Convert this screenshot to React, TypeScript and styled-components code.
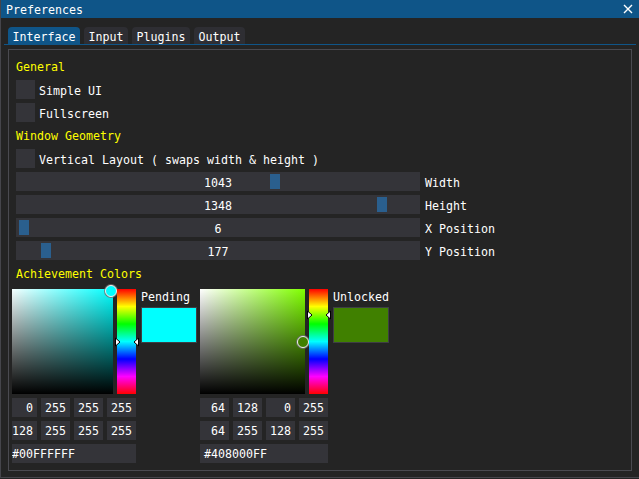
import React from 'react';
import styled, { createGlobalStyle } from 'styled-components';

const BLUE = '#0f5588';
const FRAME = '#343439';

const GlobalStyle = createGlobalStyle`
  html, body {
    margin: 0;
    padding: 0;
    background: #242424;
    overflow: hidden;
  }
  body {
    font-family: "DejaVu Sans Mono", "Liberation Mono", monospace;
    font-size: 11.63px;
    color: #ffffff;
  }
`;

const Window = styled.div`
  width: 640px;
  height: 478px;
  box-sizing: border-box;
  border: 1px solid #45454b;
  border-top: none;
  background: #242424;
  overflow: hidden;
  display: flex;
  flex-direction: column;
`;

const TitleBar = styled.div`
  height: 18px;
  flex: none;
  margin: 0 -1px;
  background: ${BLUE};
  display: flex;
  align-items: center;
  justify-content: space-between;
  padding: 0 7px 0 6px;
`;

const TitleText = styled.span`
  padding-top: 1px;
`;

const Body = styled.div`
  padding: 9px 7px 0;
  display: flex;
  flex-direction: column;
`;

const TabBar = styled.div`
  display: flex;
  gap: 4px;
  margin: 0 -4px;
  padding: 0 4px;
  height: 17px;
  border-bottom: 1px solid ${BLUE};
`;

const Tab = styled.div<{ $active?: boolean }>`
  padding: 0 4.5px;
  height: 17px;
  line-height: 20px;
  border-radius: 4px 4px 0 0;
  background: ${(p) => (p.$active ? BLUE : '#2e2e33')};
`;

const Child = styled.div`
  margin-top: 4px;
  height: 422px;
  box-sizing: border-box;
  border: 1px solid #4a4a50;
  padding: 7px;
  display: flex;
  flex-direction: column;
  gap: 4px;
`;

const Header = styled.div`
  height: 19px;
  line-height: 21px;
  color: #ffff00;
`;

const CheckRow = styled.div`
  display: flex;
  align-items: center;
  gap: 4px;
  height: 19px;
`;

const RowText = styled.span`
  padding-top: 2px;
`;

const CheckBox = styled.div`
  width: 19px;
  height: 19px;
  background: ${FRAME};
`;

const SliderRow = styled.div`
  display: flex;
  align-items: center;
  gap: 5px;
  height: 19px;
`;

const SliderTrack = styled.div`
  position: relative;
  width: 404px;
  height: 19px;
  background: ${FRAME};
  display: flex;
  align-items: center;
  justify-content: center;
`;

const Grab = styled.div`
  position: absolute;
  top: 2px;
  width: 10px;
  height: 15px;
  background: #2a5f8e;
`;

const SliderValue = styled.span`
  position: relative;
  padding-top: 2px;
`;

const PickerRow = styled.div`
  margin-top: 2px;
  margin-left: -4px;
  display: flex;
  gap: 3px;
  clip-path: inset(-20px -20px -20px 0);
`;

const Picker = styled.div<{ $shift?: number }>`
  display: flex;
  margin-left: ${(p) => p.$shift ?? 0}px;
`;

const PickerMain = styled.div`
  width: 128px;
  display: flex;
  flex-direction: column;
  gap: 4px;
`;

const PickerTop = styled.div`
  display: flex;
  gap: 4px;
  height: 105px;
`;

const SVSquare = styled.div<{ $hue: string }>`
  position: relative;
  width: 105px;
  height: 105px;
  background: linear-gradient(to bottom, rgba(0, 0, 0, 0), #000),
    linear-gradient(to right, #fff, ${(p) => p.$hue});
`;

const SVCursor = styled.div<{ $color: string }>`
  position: absolute;
  width: 12px;
  height: 12px;
  box-sizing: border-box;
  border-radius: 50%;
  border: 1.5px solid #f0f0f0;
  box-shadow: 0 0 0 1px rgba(110, 110, 110, 0.8);
  background: ${(p) => p.$color};
  transform: translate(-6px, -6px);
`;

const HueBar = styled.div`
  position: relative;
  width: 19px;
  height: 105px;
  background: linear-gradient(
    to bottom,
    #ff0000 0%,
    #ffff00 16.67%,
    #00ff00 33.33%,
    #00ffff 50%,
    #0000ff 66.67%,
    #ff00ff 83.33%,
    #ff0000 100%
  );
`;

const HueArrow = styled.svg<{ $side: 'left' | 'right' }>`
  position: absolute;
  width: 6px;
  height: 9px;
  transform: translateY(-4.5px);
  ${(p) => (p.$side === 'left' ? 'left: -2.5px;' : 'right: -2.5px;')}
`;

const FieldGrid = styled.div`
  display: grid;
  grid-template-columns: repeat(4, 29px);
  gap: 4px;
`;

const Field = styled.div`
  height: 19px;
  line-height: 21px;
  background: ${FRAME};
  text-align: center;
  white-space: pre;
`;

const HexField = styled.div`
  height: 19px;
  line-height: 21px;
  background: ${FRAME};
  padding-left: 4px;
`;

const LabelCol = styled.div`
  margin-left: 5px;
  padding-top: 1px;
  display: flex;
  flex-direction: column;
  gap: 4px;
`;

const PickerLabel = styled.div`
  height: 13px;
  line-height: 14px;
`;

const Swatch = styled.div<{ $color: string }>`
  width: 56px;
  height: 36px;
  box-sizing: border-box;
  border: 1px solid #3e3e44;
  background: ${(p) => p.$color};
`;

const CloseIcon = () => (
  <svg width="10" height="10" viewBox="0 0 10 10">
    <path d="M1 1 L9 9 M9 1 L1 9" stroke="#ffffff" strokeWidth="1.4" />
  </svg>
);

const Slider = ({ value, t, label }: { value: string; t: number; label: string }) => (
  <SliderRow>
    <SliderTrack>
      <Grab style={{ left: 2 + t * 390 }} />
      <SliderValue>{value}</SliderValue>
    </SliderTrack>
    <RowText>{label}</RowText>
  </SliderRow>
);

interface ColorPickerProps {
  hue: string;
  color: string;
  sv: [number, number];
  hueT: number;
  rgba: string[];
  hsva: string[];
  hex: string;
  label: string;
  shift?: number;
}

const ColorPicker = ({ hue, color, sv, hueT, rgba, hsva, hex, label, shift }: ColorPickerProps) => (
  <Picker $shift={shift}>
    <PickerMain>
      <PickerTop>
        <SVSquare $hue={hue}>
          <SVCursor $color={color} style={{ left: sv[0], top: sv[1] }} />
        </SVSquare>
        <HueBar>
          <HueArrow $side="left" viewBox="0 0 6 9" style={{ top: hueT * 105 }}>
            <polygon points="0.5,0.5 5,4.5 0.5,8.5" fill="#fff" stroke="#000" strokeWidth="1" />
          </HueArrow>
          <HueArrow $side="right" viewBox="0 0 6 9" style={{ top: hueT * 105 }}>
            <polygon points="5.5,0.5 1,4.5 5.5,8.5" fill="#fff" stroke="#000" strokeWidth="1" />
          </HueArrow>
        </HueBar>
      </PickerTop>
      <FieldGrid>
        {rgba.concat(hsva).map((v, i) => (
          <Field key={i}>{v}</Field>
        ))}
      </FieldGrid>
      <HexField>{hex}</HexField>
    </PickerMain>
    <LabelCol>
      <PickerLabel>{label}</PickerLabel>
      <Swatch $color={color} />
    </LabelCol>
  </Picker>
);

const App = () => (
  <>
    <GlobalStyle />
    <Window>
      <TitleBar>
        <TitleText>Preferences</TitleText>
        <CloseIcon />
      </TitleBar>
      <Body>
        <TabBar>
          <Tab $active>Interface</Tab>
          <Tab>Input</Tab>
          <Tab>Plugins</Tab>
          <Tab>Output</Tab>
        </TabBar>
        <Child>
          <Header>General</Header>
          <CheckRow>
            <CheckBox />
            <RowText>Simple UI</RowText>
          </CheckRow>
          <CheckRow>
            <CheckBox />
            <RowText>Fullscreen</RowText>
          </CheckRow>
          <Header>Window Geometry</Header>
          <CheckRow>
            <CheckBox />
            <RowText>Vertical Layout ( swaps width &amp; height )</RowText>
          </CheckRow>
          <Slider value="1043" t={0.646} label="Width" />
          <Slider value="1348" t={0.921} label="Height" />
          <Slider value="6" t={0.002} label="X Position" />
          <Slider value="177" t={0.059} label="Y Position" />
          <Header>Achievement Colors</Header>
          <PickerRow>
            <ColorPicker
              shift={-4}
              hue="#00ffff"
              color="#00ffff"
              sv={[103, 2]}
              hueT={0.5}
              rgba={['  0', '255', '255', '255']}
              hsva={['128', '255', '255', '255']}
              hex="#00FFFFFF"
              label="Pending"
            />
            <ColorPicker
              hue="#80ff00"
              color="#408000"
              sv={[103, 52.5]}
              hueT={0.25}
              rgba={[' 64', '128', '  0', '255']}
              hsva={[' 64', '255', '128', '255']}
              hex="#408000FF"
              label="Unlocked"
            />
          </PickerRow>
        </Child>
      </Body>
    </Window>
  </>
);

export default App;
